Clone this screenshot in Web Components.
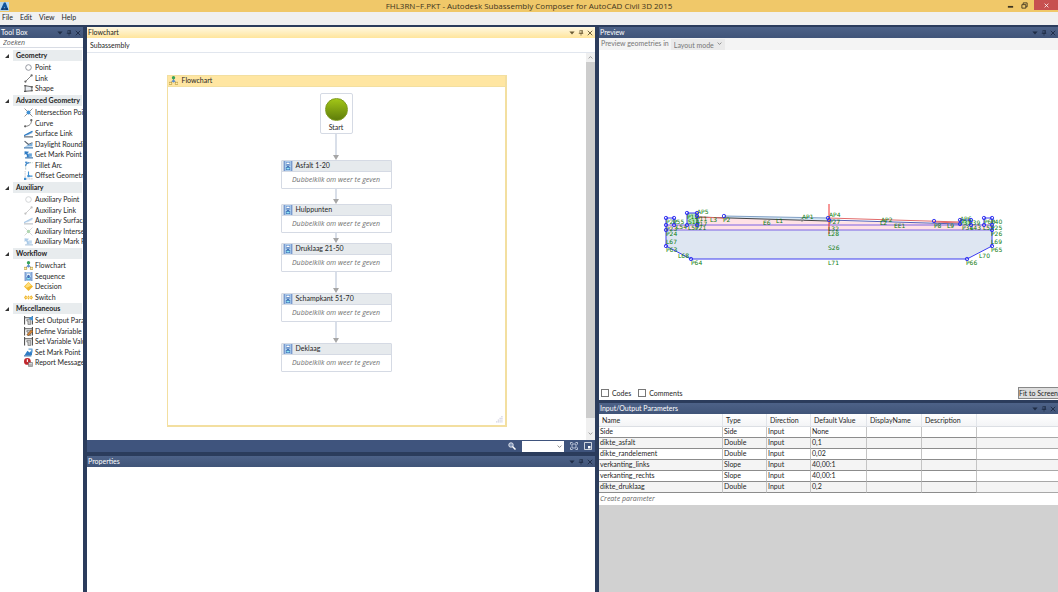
<!DOCTYPE html>
<html lang="nl">
<head>
    <meta charset="UTF-8">
    <meta name="viewport" content="width=device-width, initial-scale=1.0">
    <title>Subassembly Composer</title>
    <style>
        html, body {
            margin: 0;
            height: 100%;
        }
        body {
            --navy: #2b3c5c;
            --line: #d5dae4;
            --ink: #1e1e1e;
            --wide: "Open Sans", "Noto Sans", sans-serif;
            font-family: Lato, "Open Sans", sans-serif;
            font-size: 7px;
            line-height: 10px;
            color: var(--ink);
            overflow: hidden;
        }
    </style>
</head>
<body>
    <app-window></app-window>

    <script>
// Shared rules for every shadow root
const base = `
  *, *::before, *::after { box-sizing: border-box; }
  button, select, input {
    font: inherit;
    color: inherit;
    margin: 0;
    padding: 0;
    border: 0;
    background: none;
  }
`;

function define(name, css, render) {
  customElements.define(name, class extends HTMLElement {
    constructor() {
      super();
      this.attachShadow({mode: 'open'});
    }
    connectedCallback() {
      this.shadowRoot.innerHTML = `<style>${base}${css}</style>${render(this)}`;
    }
  });
}

// 16x16 icons
const seq = `<path d="M2 0h12v16H2z" fill="#9dbbe4"/><path d="M2 0v16M14 0v16" stroke="#7496cc" stroke-width="2"/><rect x="4" y="1" width="8" height="14" fill="#d2f2fc"/>
  <rect x="5" y="2" width="6" height="4" fill="#fff" stroke="#5b86c6"/><rect x="5" y="10" width="6" height="4" fill="#8fe8f6" stroke="#2f5fae"/><path d="M8 5v5M5 7l3 3 3-3" stroke="#2f5fae" stroke-width="1.500" fill="none"/>`;
const flow = `<path d="M8 5v4M3 12l5-4 5 4" stroke="#5b7fae" fill="none" stroke-width="1.5"/><circle cx="8" cy="3" r="3" fill="#37a35a"/>
  <path d="M8 6l3 3-3 3-3-3z" fill="#5d8fd0"/><rect x="0" y="11" width="5" height="4" fill="#fff0b0" stroke="#b08a26"/><rect x="11" y="11" width="5" height="4" fill="#fff0b0" stroke="#b08a26"/>`;
const surf = `<path d="M1 11L15 3v4L7 11z" fill="#8fb9e0"/><path d="M0 12L15 4" stroke="#2f7cc4" stroke-width="2"/><path d="M0 14h16" stroke="#56606c" stroke-width="2"/>`;
const mark = `<path d="M1 2l8 1-3 3 4 3v4H5V9L3 7 1 9z" fill="#2f7cc4"/><path d="M8 6h6v6H8z" fill="#6aa5d8"/><path d="M2 14h14" stroke="#2f6ca8" stroke-width="2"/>`;
const param = `<path d="M1 0v15M15 0v15M1 3h14" stroke="#555" stroke-width="2" fill="none"/><path d="M5 6h7v9H7V9H5z" fill="#c7c7c7" stroke="#555"/>`;
const icons = {
  app: `<rect width="16" height="16" fill="#b8d8ee"/><path d="M1 14L7 1h3l5 13h-4L8 9l-3 5z" fill="#12559b"/><path d="M3 11h11v3H3z" fill="#0d3a70"/>`,
  point: `<circle cx="8" cy="8" r="5" fill="#fff" stroke="#8a8f96" stroke-width="1.6"/>`,
  link: `<path d="M3 13L13 3" stroke="#777" stroke-width="1.6"/><circle cx="2.5" cy="13.500" r="2" fill="#666"/><circle cx="13.500" cy="2.500" r="2" fill="#666"/>`,
  shape: `<path d="M2 3l12 2v7L2 13z" fill="#e9edf2" stroke="#555" stroke-width="1.6"/><path d="M0 3h4M0 13h4M12 5h4M12 12h4" stroke="#555" stroke-width="2"/>`,
  cross: `<path d="M1 1l14 14M15 1L1 15" stroke="#777" stroke-width="1.4"/><circle cx="8" cy="8" r="3.500" fill="#3f8fd2"/>`,
  curve: `<path d="M13 1c1 7-3 12-11 12" fill="none" stroke="#777" stroke-width="1.6"/><circle cx="13" cy="2" r="2" fill="#666"/><circle cx="2" cy="13" r="2" fill="#666"/>`,
  surface: surf,
  daylight: `<path d="M1 2l7 6 7-3" stroke="#56606c" fill="none" stroke-width="2"/><path d="M1 12L15 5v6z" fill="#7fb0dc"/><path d="M0 14h16" stroke="#2f6ca8" stroke-width="2"/>`,
  mark: mark,
  fillet: `<path d="M3 15V8c0-4 2-5 6-5h6" fill="none" stroke="#8aa" stroke-dasharray="2 1.500" stroke-width="1.500"/><path d="M3 9c0-4 3-6 7-6" fill="none" stroke="#2f7cc4" stroke-width="2"/><path d="M2 1h4v3H2z" fill="#4b8fd0"/>`,
  offset: `<path d="M2 0v14h14" fill="none" stroke="#99a" stroke-dasharray="2 1"/><path d="M8 1v8h7" fill="none" stroke="#3f8fd2" stroke-width="2"/><path d="M0 12h4v4H0zM6 7h4v4H6z" fill="#3f8fd2"/>`,
  across: `<path d="M1 1l14 14M15 1L1 15" stroke="#888" stroke-width="1.4"/><circle cx="8" cy="8" r="3" fill="#3c9c3c"/>`,
  flow: flow,
  seq: seq,
  decision: `<path d="M8 0l8 8-8 8-8-8z" fill="#f2b92e"/><path d="M8 1l5 5-8 4-3-2z" fill="#ffdf7d"/>`,
  switch: `<path d="M0 8l3-4 3 3 2-3 2 3 3-3 3 4-3 4-3-3-2 3-2-3-3 3z" fill="#f0b731"/><path d="M2 8h12" stroke="#fff0b8"/>`,
  setout: param + `<path d="M8 4l8-4v9z" fill="#3f8fd2"/>`,
  define: param + `<path d="M5 14L13 5l3 3-8 7z" fill="#d98a3a" stroke="#74431a"/>`,
  setvar: param,
  setmark: `<path d="M1 13L6 5l4 3 5-6-1 11z" fill="#2f7cc4"/><path d="M8 2h6v6" fill="none" stroke="#6aa5d8" stroke-width="2"/><path d="M0 14h13" stroke="#2f6ca8" stroke-width="2"/>`,
  report: `<circle cx="6" cy="6" r="6" fill="#c0272d"/><path d="M6 2v5" stroke="#fff" stroke-width="2"/><path d="M8 8h7v7H8z" fill="#f0f0f0" stroke="#555"/><path d="M9 11h5M9 13h5" stroke="#666"/>`,
  drop: `<path d="M1 4h14l-7 8z" fill="currentColor"/>`,
  pin: `<path d="M5 1h7v8H5zM2 9h12M8 9v6M10 1v8" fill="none" stroke="currentColor" stroke-width="1.800"/>`,
  close: `<path d="M2 2l12 12M14 2L2 14" stroke="currentColor" stroke-width="2.500"/>`,
  min: `<path d="M2 11h12" stroke="currentColor" stroke-width="4"/>`,
  restore: `<path d="M2 6h9v8H2zM5 5V2h9v9h-3" fill="none" stroke="currentColor" stroke-width="2"/>`,
  up: `<path d="M2 11l6-6 6 6" fill="none" stroke="currentColor" stroke-width="2.500"/>`,
  down: `<path d="M2 5l6 6 6-6" fill="none" stroke="currentColor" stroke-width="2.500"/>`,
  zoom: `<circle cx="6" cy="6" r="4.500" fill="#7e92b5" stroke="#fff" stroke-width="1.500"/><path d="M9 9l6 6" stroke="#fff" stroke-width="3"/>`,
  fit: `<path d="M1 5V1h4M11 1h4v4M15 11v4h-4M5 15H1v-4" fill="none" stroke="#dfe6f2" stroke-width="1.500"/><path d="M4 4h8v8H4z" fill="none" stroke="#dfe6f2" stroke-width="1.500"/>`,
  map: `<path d="M1 1h14v14H1z" fill="none" stroke="#fff" stroke-width="1.500"/><path d="M8 8h5v5H8z" fill="#fff"/>`,
  grip: `<path d="M12 0h3v3h-3zM8 4h3v3H8zM12 4h3v3h-3zM4 8h3v3H4zM8 8h3v3H8zM12 8h3v3h-3zM0 12h3v3H0zM4 12h3v3H4zM8 12h3v3H8zM12 12h3v3h-3z" fill="#d4d4e2"/>`
};

define('ui-icon', `
  :host { display: block; flex: none; width: 9px; height: 9px; }
  svg { display: block; width: 100%; height: 100%; }
`, el => `<svg viewBox="0 0 16 16" aria-hidden="true">${icons[el.getAttribute('name')]}</svg>`);

define('title-bar', `
  :host {
    display: grid;
    grid-template-columns: 1fr auto 1fr;
    height: 12px;
    background: #f0c869;
    font-family: var(--wide);
    font-size: 8px;
    line-height: 12px;
    color: #3d3420;
  }
  ui-icon { align-self: center; }
  .buttons { display: flex; justify-content: flex-end; gap: 6px; }
  button { display: flex; justify-content: center; width: 8px; height: 10px; }
  button ui-icon { width: 7px; height: 7px; }
  .close { width: 24px; background: #c75050; color: #fff; }
  .close ui-icon { width: 5px; height: 5px; }
`, () => `
  <ui-icon name="app"></ui-icon>
  <div>FHL3RN~F.PKT - Autodesk Subassembly Composer for AutoCAD Civil 3D 2015</div>
  <div class="buttons">
    <button aria-label="Minimize"><ui-icon name="min"></ui-icon></button>
    <button aria-label="Restore"><ui-icon name="restore"></ui-icon></button>
    <button class="close" aria-label="Close"><ui-icon name="close"></ui-icon></button>
  </div>`);

define('menu-bar', `
  :host { display: flex; align-items: flex-start; gap: 7px; height: 13px; padding: 0 2px; background: #f0f0f0; }
  button { line-height: 11px; }
`, () => ['File', 'Edit', 'View', 'Help'].map(t => `<button>${t}</button>`).join(''));

// Docked panel: caption with its three buttons, content in the slot
define('dock-panel', `
  :host {
    display: flex;
    flex-direction: column;
    min-width: 0;
    min-height: 0;
    overflow: hidden;
    background: #fff;
  }
  header {
    display: flex;
    flex: none;
    align-items: center;
    height: 11px;
    padding: 0 2px 0 1px;
    background: linear-gradient(#4d6288, #405478);
    color: #fff;
    line-height: 11px;
  }
  :host([active]) header {
    background: linear-gradient(#fff8e2, #ffe59c);
    color: #222;
  }
  h2 { flex: 1; margin: 0; font-size: 7px; font-weight: 400; white-space: nowrap; }
  .tools { display: flex; gap: 3px; color: #1f2c45; }
  :host([active]) .tools { color: #6b5b34; }
  ui-icon { width: 6px; height: 6px; }
`, el => `
  <header>
    <h2>${el.getAttribute('caption')}</h2>
    <div class="tools">
      <button aria-label="Menu"><ui-icon name="drop"></ui-icon></button>
      <button aria-label="Pin"><ui-icon name="pin"></ui-icon></button>
      <button aria-label="Close"><ui-icon name="close"></ui-icon></button>
    </div>
  </header>
  <slot></slot>`);

define('tool-item', `
  :host { display: flex; align-items: flex-start; gap: 2px; padding-left: 24px; line-height: 9px; white-space: nowrap; }
  :host([dim]) ui-icon { opacity: .4; }
`, el => `<ui-icon name="${el.getAttribute('icon')}"></ui-icon><slot></slot>`);

define('tool-group', `
  :host { display: block; margin-bottom: 1px; }
  h3 {
    margin: 0 1px 1px 13px;
    padding-left: 3px;
    height: 11px;
    background: #e8ecee;
    font-size: 7px;
    line-height: 11px;
    white-space: nowrap;
    position: relative;
  }
  h3::before {
    content: "";
    position: absolute;
    left: -8px;
    top: 4px;
    border: 2px solid transparent;
    border-right-color: #333;
    border-bottom-color: #333;
  }
  .items { display: grid; grid-auto-rows: 11px 10px; padding-top: 1px; margin-bottom: -1px; }
`, el => `<h3>${el.getAttribute('caption')}</h3><div class="items"><slot></slot></div>`);

const tools = [
  ['Geometry', [['point', 'Point'], ['link', 'Link'], ['shape', 'Shape']]],
  ['Advanced Geometry', [['cross', 'Intersection Point'], ['curve', 'Curve'], ['surface', 'Surface Link'],
    ['daylight', 'Daylight Rounding'], ['mark', 'Get Mark Point'], ['fillet', 'Fillet Arc'], ['offset', 'Offset Geometry']]],
  ['Auxiliary', [['point', 'Auxiliary Point', 1], ['link', 'Auxiliary Link', 1], ['surface', 'Auxiliary Surface Link', 1],
    ['across', 'Auxiliary Intersection', 1], ['mark', 'Auxiliary Mark Point', 1]]],
  ['Workflow', [['flow', 'Flowchart'], ['seq', 'Sequence'], ['decision', 'Decision'], ['switch', 'Switch']]],
  ['Miscellaneous', [['setout', 'Set Output Parameter'], ['define', 'Define Variable'], ['setvar', 'Set Variable Value'],
    ['setmark', 'Set Mark Point'], ['report', 'Report Message']]]
];

define('tool-box', `
  :host { display: block; overflow: hidden; }
  input {
    display: block;
    width: 100%;
    height: 10px;
    margin-bottom: 2px;
    padding: 0 3px;
    border-bottom: 1px solid #d8dce4;
    font-family: var(--wide);
    font-style: italic;
  }
  input::placeholder { color: #555; opacity: 1; }
`, () => `
  <input type="text" placeholder="Zoeken" aria-label="Zoeken">
  ${tools.map(([caption, items]) => `<tool-group caption="${caption}">
    ${items.map(([icon, text, dim]) => `<tool-item icon="${icon}" ${dim ? 'dim' : ''}>${text}</tool-item>`).join('')}
  </tool-group>`).join('')}`);

define('flow-arrow', `
  :host { display: flex; flex-direction: column; align-items: center; }
  .line { flex: 1; width: 2px; background: #d9dfe9; }
  .head { border: 3px solid transparent; border-top: 5px solid #a6a6a6; border-bottom: 0; }
`, () => `<div class="line"></div><div class="head"></div>`);

define('flow-step', `
  :host {
    display: block;
    width: 111px;
    border: 1px solid var(--line);
    border-radius: 1px;
    background: #fff;
  }
  header {
    display: flex;
    align-items: flex-start;
    gap: 3px;
    height: 11px;
    padding-left: 1px;
    line-height: 9px;
    background: #e6eaed;
    border-bottom: 1px solid var(--line);
  }
  ui-icon { width: 10px; height: 10px; }
  p { margin: 0; text-align: center; font-family: var(--wide); font-style: italic; line-height: 16px; color: #6e6e6e; }
`, () => `<header><ui-icon name="seq"></ui-icon><slot></slot></header><p>Dubbelklik om weer te geven</p>`);

define('flow-chart', `
  :host { display: flex; flex-direction: column; flex: 1; min-height: 0; }
  nav { flex: none; height: 15px; padding-left: 3px; line-height: 15px; border-bottom: 1px solid #e1e6ee; }
  .view { display: flex; flex: 1; min-height: 0; }
  .canvas { flex: 1; padding-top: 22px; overflow: hidden; }
  .sheet {
    display: flex;
    flex-direction: column;
    align-items: center;
    position: relative;
    width: 340px;
    height: 352px;
    margin: 0 auto;
    border: 1px solid #f3dfa0;
    border-right-width: 2px;
    border-bottom-width: 2px;
  }
  .sheet > header {
    display: flex;
    flex: none;
    align-self: stretch;
    align-items: flex-start;
    gap: 4px;
    height: 11px;
    margin-bottom: 6px;
    padding-left: 1px;
    line-height: 9px;
    background: #ffe6a2;
    border-bottom: 1px solid #f3dfa0;
  }
  .start {
    flex: none;
    width: 33px;
    height: 41px;
    padding-top: 4px;
    border: 1px solid var(--line);
    border-radius: 2px;
    text-align: center;
  }
  .start::before {
    content: "";
    display: block;
    width: 23px;
    height: 23px;
    margin: 0 auto 1px;
    border-radius: 50%;
    background: linear-gradient(#a2c617, #5f7d0a);
    border: 1px solid #7c9a1c;
  }
  .a { height: 26px; }
  .b { height: 15px; }
  .c { height: 10px; }
  .d { height: 21px; }
  .grip { position: absolute; right: 2px; bottom: 2px; width: 7px; height: 7px; }
  .scroll {
    display: flex;
    flex: none;
    flex-direction: column;
    width: 9px;
    background: #f0f0f0;
    color: #888;
  }
  .scroll button { display: flex; justify-content: center; align-items: center; height: 9px; }
  .scroll button:last-child { height: 22px; align-items: flex-end; padding-bottom: 4px; }
  .scroll ui-icon { width: 5px; height: 5px; }
  .thumb { flex: 1; background: #cdcdcd; }
  footer {
    display: flex;
    flex: none;
    justify-content: flex-end;
    align-items: center;
    gap: 6px;
    height: 12px;
    padding-right: 3px;
    background: #3f547d;
  }
  footer button ui-icon { width: 8px; height: 8px; }
  .combo { display: flex; align-items: center; position: relative; }
  .combo select { appearance: none; width: 42px; height: 11px; background: #fff; }
  .combo ui-icon { position: absolute; right: 2px; width: 5px; height: 5px; color: #666; }
`, () => `
  <nav>Subassembly</nav>
  <div class="view">
    <div class="canvas">
      <div class="sheet">
        <header><ui-icon name="flow"></ui-icon>Flowchart</header>
        <div class="start">Start</div>
        <flow-arrow class="a"></flow-arrow>
        <flow-step>Asfalt 1-20</flow-step>
        <flow-arrow class="b"></flow-arrow>
        <flow-step>Hulppunten</flow-step>
        <flow-arrow class="c"></flow-arrow>
        <flow-step>Druklaag 21-50</flow-step>
        <flow-arrow class="d"></flow-arrow>
        <flow-step>Schampkant 51-70</flow-step>
        <flow-arrow class="d"></flow-arrow>
        <flow-step>Deklaag</flow-step>
        <ui-icon class="grip" name="grip"></ui-icon>
      </div>
    </div>
    <div class="scroll">
      <button aria-label="Scroll up"><ui-icon name="up"></ui-icon></button>
      <div class="thumb"></div>
      <button aria-label="Scroll down"><ui-icon name="down"></ui-icon></button>
    </div>
  </div>
  <footer>
    <button aria-label="Zoom"><ui-icon name="zoom"></ui-icon></button>
    <div class="combo"><select aria-label="Zoom level"><option></option></select><ui-icon name="down"></ui-icon></div>
    <button aria-label="Fit"><ui-icon name="fit"></ui-icon></button>
    <button aria-label="Overview"><ui-icon name="map"></ui-icon></button>
  </footer>`);

// Cross section of the road: points, then labels [x, y, text]
const points = [[666, 218], [674, 218], [666, 225], [674, 225], [666, 230], [687, 213], [697, 213], [687, 225], [697, 216],
  [697, 225], [724, 216], [828, 218], [829, 220], [934, 221], [960, 220], [960, 224], [971, 220], [971, 225], [984, 218],
  [992, 218], [984, 225], [992, 225], [992, 230], [666, 246], [691, 259], [967, 259], [992, 246]];
const labels = [[697, 214, 'AP5'], [710, 222, 'L3'], [723, 222, 'P2'], [763, 225, 'E6'], [776, 223, 'L1'], [802, 219, 'AP1'],
  [829, 217, 'AP4'], [829, 224, 'P27'], [828, 231, 'L32'], [828, 236, 'L28'], [828, 250, 'S26'], [828, 265, 'L71'],
  [881, 222, 'AP2'], [880, 225, 'L2'], [894, 228, 'EE1'], [934, 228, 'P8'], [947, 228, 'L9'], [691, 265, 'P64'],
  [678, 258, 'L68'], [666, 252, 'P63'], [666, 244, 'L67'], [666, 236, 'P24'], [966, 265, 'P66'], [979, 258, 'L70'],
  [991, 252, 'P65'], [991, 244, 'L69'], [991, 236, 'P26'],
  [666, 224, 'P22'], [673, 224, 'P55'], [666, 231, 'P23'], [676, 229, 'L54'], [687, 219, 'P12'], [688, 224, 'S14'],
  [688, 230, 'L57'], [696, 221, 'P11'], [696, 226, 'P17'], [695, 230, 'P21'], [960, 221, 'AP6'], [960, 225, 'P31'],
  [962, 230, 'P34'], [969, 225, 'P39'], [970, 230, 'L43'], [984, 224, 'P60'], [991, 224, 'P40'], [983, 230, 'L59'], [991, 230, 'P25']];

define('section-preview', `
  :host { display: flex; flex-direction: column; flex: 1; min-height: 0; }
  .bar { display: flex; flex: none; gap: 2px; height: 12px; padding: 0 2px; background: #f4f4f4; color: #777; }
  .combo { display: flex; align-items: flex-end; position: relative; }
  .combo select {
    appearance: none;
    width: 54px;
    height: 11px;
    padding: 0 3px;
    background: #eaeaea;
    color: #777;
    opacity: 1;
  }
  .combo ui-icon { position: absolute; right: 3px; bottom: 4px; width: 5px; height: 5px; }
  svg { display: block; flex: 1; width: 100%; min-height: 0; }
  text { font: 6px "DejaVu Sans", sans-serif; fill: #0a7a0a; }
  .foot { display: flex; flex: none; align-items: center; gap: 7px; height: 13px; padding-left: 2px; margin-bottom: 1px; }
  .foot label { display: flex; align-items: center; gap: 3px; }
  label input { appearance: none; width: 8px; height: 8px; border: 1px solid #777; background: #fff; }
  .fit { height: 12px; margin-left: auto; padding: 0; background: #ddd; border: 1px solid #888; border-right: 0; white-space: nowrap; }
`, () => `
  <div class="bar">
    <label for="mode">Preview geometries in</label>
    <div class="combo">
      <select id="mode" disabled><option>Layout mode</option></select><ui-icon name="down"></ui-icon>
    </div>
  </div>
  <svg viewBox="599 50 459 336">
    <path d="M666 230h326v16l-25 13H691l-25-13z" fill="#dee6f2"/>
    <path d="M666 225h31v-8h27l105 4 131 3h32v6H666z" fill="#ffe1e5"/>
    <path d="M687 213h10v12h-10zM960 220h11v5h-11z" fill="#b9e6bd"/>
    <path d="M724 216l104 2v3l-104-3z" fill="#d6e6f6"/>
    <g fill="none" stroke-width="1">
      <path d="M666 225h326M666 230h326" stroke="#7c62e4"/>
      <path d="M697 217l131 4" stroke="#444"/>
      <path d="M724 216l104 2" stroke="#7f9fc4"/>
      <path d="M697 217l27 1M828 218l132 4M934 222l26 1" stroke="#e26a6a"/>
      <path d="M828 220l132 4" stroke="#5560b8"/>
      <path d="M666 230v16l25 13h276l25-13v-16M666 230v-12h8v7M687 225v-12h10v12M960 225v-5h11v5M984 225v-7h8v12" stroke="#3c3cf0"/>
      <path d="M829 204v30" stroke="#f03030"/>
    </g>
    <circle cx="802" cy="220" r="1.500" fill="none" stroke="#999" stroke-width=".7"/>
    ${labels.map(([x, y, t]) => `<text x="${x}" y="${y}">${t}</text>`).join('')}
    ${points.map(([x, y]) => `<circle cx="${x}" cy="${y}" r="1.700" fill="none" stroke="#2a2af0" stroke-width=".9"/>`).join('')}
  </svg>
  <div class="foot">
    <label><input type="checkbox">Codes</label>
    <label><input type="checkbox">Comments</label>
    <button class="fit">Fit to Screen</button>
  </div>`);

const columns = ['Name', 'Type', 'Direction', 'Default Value', 'DisplayName', 'Description', ''];
const rows = [
  ['Side', 'Side', 'Input', 'None'],
  ['dikte_asfalt', 'Double', 'Input', '0,1'],
  ['dikte_randelement', 'Double', 'Input', '0,02'],
  ['verkanting_links', 'Slope', 'Input', '40,00:1'],
  ['verkanting_rechts', 'Slope', 'Input', '40,00:1'],
  ['dikte_druklaag', 'Double', 'Input', '0,2']
];

define('param-table', `
  :host { display: block; flex: 1; background: #d1d1d1; overflow: hidden; }
  table { width: 100%; border-collapse: separate; border-spacing: 0; table-layout: fixed; background: #fff; }
  th, td { height: 11px; padding: 0 1px; text-align: left; vertical-align: top; font-weight: 400; line-height: 9px; white-space: nowrap; border-right: 1px solid #c4c4c4; }
  th { height: 13px; padding: 0 3px; line-height: 12px; background: linear-gradient(#fff, #f3f4f6); border-right-color: #e2e5ea; border-bottom: 1px solid #dcdfe4; }
  tbody tr:nth-child(even) { background: #f4f4f4; }
  td { border-bottom: 1px solid #8c8c8c; }
  th:last-child, td:last-child { border-right: 0; }
  td:last-child { border-bottom-color: #a8a8a8; }
  .name { width: 124px; }
  .s { width: 44px; }
  .m { width: 56px; }
  .l { width: 55px; }
  .new { display: block; width: 100%; height: 12px; padding: 0 1px; background: #fff; text-align: left; font-family: var(--wide); font-style: italic; color: #666; }
`, () => `
  <table>
    <colgroup><col class="name"><col class="s"><col class="s"><col class="m"><col class="l"><col class="l"><col></colgroup>
    <thead><tr>${columns.map(c => `<th>${c}</th>`).join('')}</tr></thead>
    <tbody>${rows.map(r => `<tr>${columns.map((c, i) => `<td>${r[i] || ''}</td>`).join('')}</tr>`).join('')}</tbody>
  </table>
  <button class="new">Create parameter</button>`);

define('app-window', `
  :host { display: flex; flex-direction: column; height: 100vh; background: var(--navy); }
  title-bar, menu-bar { flex: none; }
  main {
    display: grid;
    grid-template-columns: 83px minmax(0, 508fr) minmax(0, 459fr);
    gap: 4px;
    flex: 1;
    min-height: 0;
    padding-top: 2px;
  }
  .column { display: grid; min-height: 0; }
  .middle { grid-template-rows: minmax(0, 425fr) minmax(0, 136fr); gap: 4px; }
  .right { grid-template-rows: minmax(0, 373fr) minmax(0, 189fr); gap: 3px; }
`, () => `
  <title-bar></title-bar>
  <menu-bar></menu-bar>
  <main>
    <dock-panel caption="Tool Box"><tool-box></tool-box></dock-panel>
    <div class="column middle">
      <dock-panel caption="Flowchart" active><flow-chart></flow-chart></dock-panel>
      <dock-panel caption="Properties"></dock-panel>
    </div>
    <div class="column right">
      <dock-panel caption="Preview"><section-preview></section-preview></dock-panel>
      <dock-panel caption="Input/Output Parameters"><param-table></param-table></dock-panel>
    </div>
  </main>`);
    </script>
</body>
</html>
